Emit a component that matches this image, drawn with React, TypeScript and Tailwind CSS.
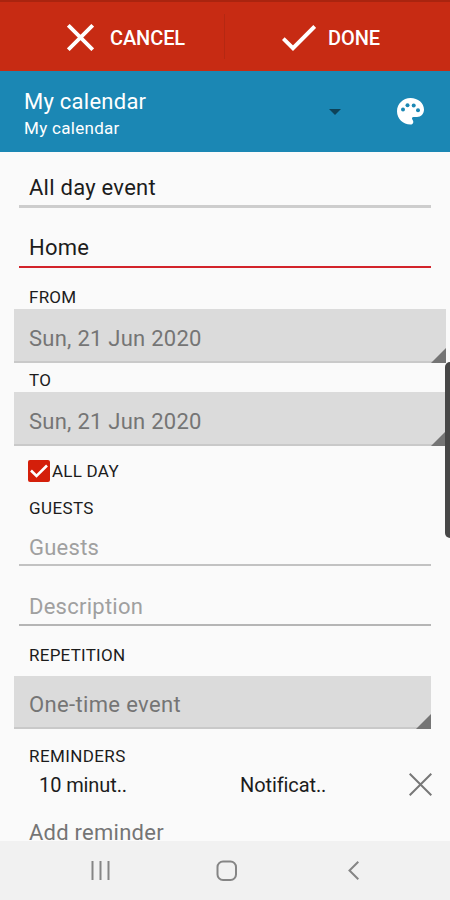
import { useState } from "react";

type PickerProps = {
  value: string;
  className: string;
};

function Picker({ value, className }: PickerProps) {
  return (
    <button
      type="button"
      className={`relative flex items-center border-b-2 border-[#c9c9c9] bg-[#dbdbdb] pl-[15px] pt-[6px] text-left text-[22px] text-[#757575] ${className}`}
    >
      {value}
      <svg className="absolute -bottom-[2px] right-0 size-[15px]" viewBox="0 0 15 15">
        <path d="M15 0V15H0z" fill="#757575" />
      </svg>
    </button>
  );
}

export default function App() {
  const [form, setForm] = useState({
    title: "All day event",
    location: "Home",
    allDay: true,
    guests: "",
    description: "",
  });

  const handleChange = (e: React.ChangeEvent<HTMLInputElement>) => {
    const { name, type, checked, value } = e.target;

    setForm({
      ...form,
      [name]: type === "checkbox" ? checked : value,
    });
  };

  return (
    <div className="relative flex h-[900px] w-[450px] flex-col overflow-hidden bg-[#fafafa] font-['Roboto',sans-serif] text-[#1c1c1c]">
      <header className="flex h-[71px] shrink-0 border-t-2 border-[#a9240f] bg-[#c72b13] text-[20px] font-medium text-white">
        <button type="button" className="my-3 flex w-[225px] items-center border-r border-[#b52812] pl-[67px] pt-[2px]">
          <svg className="size-[27px]" viewBox="0 0 27 27" fill="none" stroke="#fff" strokeWidth="3.8">
            <path d="M1.3 1.3L25.7 25.7M25.7 1.3L1.3 25.7" />
          </svg>
          <span className="ml-4 tracking-[-0.1px]">CANCEL</span>
        </button>
        <button type="button" className="my-3 flex items-center pl-[57px] pt-[2px]">
          <svg className="h-[26px] w-[34px]" viewBox="0 0 34 26" fill="none" stroke="#fff" strokeWidth="3.9">
            <path d="M1.3 13.6L11 23.2L32.7 1.5" />
          </svg>
          <span className="ml-3 tracking-[-0.1px]">DONE</span>
        </button>
      </header>

      <section className="flex h-[81px] shrink-0 items-center bg-[#1b87b4] pl-6 text-white">
        <div className="w-[305px] pt-[5px]">
          <p className="text-[22px] leading-[28px] tracking-[0.25px]">My calendar</p>
          <p className="text-[17px] leading-[24px] tracking-[0.3px]">My calendar</p>
        </div>
        <svg className="h-[6px] w-[12px]" viewBox="0 0 12 6">
          <path d="M0 0H12L6 6z" fill="#0e4258" />
        </svg>
        <svg className="ml-[56px] size-[27px]" viewBox="0 0 27 27">
          <path
            d="M13.5 0C21 0 27 5 27 11.500C27 16 24 19 20 19H16.500C15 19 14.800 20 15.200 21.200C15.800 22.500 16.500 23 16.300 24.200C16 25.800 15 26.500 13.500 26.500C6 26.500 0 20.600 0 13.200C0 6 6 0 13.500 0z"
            fill="#fff"
          />
          <g fill="#1b87b4">
            <circle cx="6" cy="11.500" r="2" />
            <circle cx="10.500" cy="7.200" r="2" />
            <circle cx="16.700" cy="7.500" r="2" />
            <circle cx="21" cy="12.200" r="2" />
          </g>
        </svg>
      </section>

      <form className="flex h-[689px] shrink-0 flex-col tracking-[0.25px]">
        <input
          name="title"
          value={form.title}
          onChange={handleChange}
          className="ml-[19px] h-[56px] w-[412px] shrink-0 border-b-[3px] border-[#cdcdcd] pl-[10px] pt-[18px] text-[22px] outline-none"
        />
        <input
          name="location"
          value={form.location}
          onChange={handleChange}
          className="ml-[19px] h-[60px] w-[412px] shrink-0 border-b-2 border-[#d3232a] pl-[10px] pt-[20px] text-[22px] outline-none"
        />

        <label className="h-[41px] shrink-0 pl-[29px] pt-[17px] text-[17px] leading-[24px]">FROM</label>
        <Picker value="Sun, 21 Jun 2020" className="ml-[14px] h-[54px] w-[432px] shrink-0" />
        <label className="h-[29px] shrink-0 pl-[29px] pt-[5px] text-[17px] leading-[24px]">TO</label>
        <Picker value="Sun, 21 Jun 2020" className="ml-[14px] h-[54px] w-[432px] shrink-0" />

        <label className="mt-[13px] flex h-[23px] shrink-0 items-center pl-[28px] text-[17px]">
          <input type="checkbox" name="allDay" checked={form.allDay} onChange={handleChange} className="sr-only" />
          <span className="mr-[2px] flex size-[22px] items-center justify-center rounded-[2px] bg-[#d41f0a]">
            {form.allDay && (
              <svg className="h-[14px] w-[18px]" viewBox="0 0 18 14" fill="none" stroke="#fff" strokeWidth="2.6">
                <path d="M1 6.500L6.500 12L17 1.500" />
              </svg>
            )}
          </span>
          <span className="pt-[2px]">ALL DAY</span>
        </label>

        <label className="mt-[14px] h-[24px] shrink-0 pl-[29px] text-[17px] leading-[24px] tracking-[0.4px]">GUESTS</label>
        <input
          name="guests"
          placeholder="Guests"
          value={form.guests}
          onChange={handleChange}
          className="ml-[19px] h-[46px] w-[412px] shrink-0 border-b-2 border-[#c2c2c2] pl-[10px] pt-[10px] text-[22px] outline-none placeholder:text-[#a0a0a0]"
        />
        <input
          name="description"
          placeholder="Description"
          value={form.description}
          onChange={handleChange}
          className="ml-[19px] h-[60px] w-[412px] shrink-0 border-b-2 border-[#b5b5b5] pl-[10px] pt-[22px] text-[22px] outline-none placeholder:text-[#a0a0a0]"
        />

        <label className="h-[50px] shrink-0 pl-[29px] pt-[17px] text-[17px] leading-[24px]">REPETITION</label>
        <Picker value="One-time event" className="ml-[14px] h-[53px] w-[417px] shrink-0 tracking-[0.35px]" />

        <label className="mt-[15px] h-[25px] shrink-0 pl-[29px] text-[17px] leading-[24px] tracking-[0.4px]">REMINDERS</label>
        <div className="flex h-[30px] shrink-0 items-center pl-[39px] text-[20px] tracking-[-0.1px]">
          <span className="w-[201px] pt-px">10 minut..</span>
          <span className="w-[169px] pt-px">Notificat..</span>
          <svg className="size-[23px]" viewBox="0 0 23 23" fill="none" stroke="#777" strokeWidth="2">
            <path d="M.7.7L22.300 22.300M22.300.7L.7 22.300" />
          </svg>
        </div>
        <p className="mt-[26px] shrink-0 pl-[29px] text-[22px] leading-[16px] text-[#757575]">Add reminder</p>
      </form>

      <nav className="flex h-[59px] shrink-0 items-center bg-[#f1f1f1] pl-[91px]">
        <svg className="h-[19px] w-[19px]" viewBox="0 0 19 19" stroke="#858585" strokeWidth="2">
          <path d="M1.500 0V19M9.500 0V19M17.500 0V19" />
        </svg>
        <svg className="ml-[106px] size-[22px]" viewBox="0 0 22 22" fill="none" stroke="#858585" strokeWidth="2">
          <rect x="1.500" y="1.500" width="18.500" height="18.500" rx="5.500" />
        </svg>
        <svg className="ml-[110px] h-[19px] w-[11px]" viewBox="0 0 11 19" fill="none" stroke="#858585" strokeWidth="2">
          <path d="M10.300.8L1.500 9.500L10.300 18.200" />
        </svg>
      </nav>

      {/* edge panel handle */}
      <div className="absolute left-[445px] top-[362px] h-[176px] w-[10px] rounded-l-[5px] bg-[#474747]" />
    </div>
  );
}
